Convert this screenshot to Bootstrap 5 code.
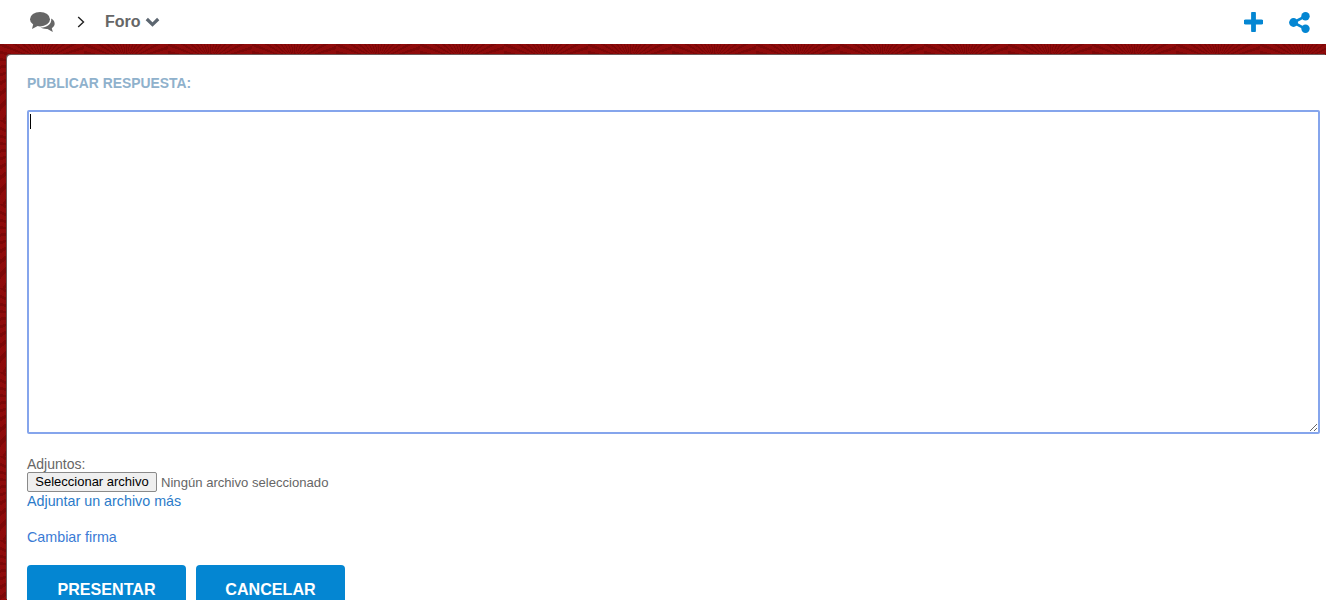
<!DOCTYPE html>
<html lang="es">
<head>
    <meta charset="UTF-8">
    <meta name="viewport" content="width=device-width, initial-scale=1.0">
    <title>Foro - Publicar respuesta</title>
    <link href="https://cdn.jsdelivr.net/npm/bootstrap@5.3.0/dist/css/bootstrap.min.css" rel="stylesheet">
    <style>
        html, body { height: 600px; overflow: hidden; }
        body {
            font-family: "Liberation Sans", Arial, sans-serif;
            font-size: 14px;
            line-height: 18px;
            color: #666;
            background-color: #8b0808;
            background-image:
                repeating-conic-gradient(from 0deg at 50% 30%, rgba(50,0,0,.16) 0 4deg, rgba(170,30,30,.12) 4deg 10deg);
            background-size: 84px 84px;
            background-position: 0 36px;
        }
        .top-bar { height: 44px; background: #fff; padding: 0 16px 0 30px; }
        .crumb-sep { margin-left: 22px; margin-right: 20px; }
        .forum-title { font-size: 16px; font-weight: 700; color: #666; line-height: 18px; margin-right: 4px; }
        .top-actions { gap: 26px; }
        .page-sheet {
            margin: 11px 0 0 7px;
            height: 545px;
            background: #fff;
            border-top-left-radius: 4px;
            box-shadow: -1px -1px 0 #6f5a5a;
            padding: 20px 6px 0 20px;
        }
        .reply-label { font-size: 13.9px; font-weight: 700; color: #8fb1cc; line-height: 16px; margin: 0 0 19px; }
        .editor-wrap { position: relative; height: 324px; }
        .reply-box {
            display: block;
            width: 100%;
            height: 100%;
            border: 2px solid #85a5ec;
            border-radius: 2px;
            outline: 0;
            padding: 0;
            background: #fff;
        }
        .text-caret { position: absolute; left: 3px; top: 4px; width: 1px; height: 15px; background: #000; }
        .attach-block { margin-top: 22px; }
        .attach-label { line-height: 16px; }
        .file-row { height: 20px; }
        .file-btn {
            font-family: "Liberation Sans", Arial, sans-serif;
            font-size: 13px;
            line-height: 16px;
            width: 130px;
            height: 20px;
            padding: 0;
            color: #000;
            background: #efefef;
            border: 1px solid #8a8a8a;
            border-radius: 2px;
        }
        .file-name { font-size: 13.1px; color: #666; margin-left: 4px; padding-top: 2px; }
        .forum-link { color: #2b7bc9; font-size: 14.3px; text-decoration: none; display: block; }
        .sign-link { margin-top: 18px; color: #3a7bd5; }
        .action-row { margin-top: 19px; gap: 10px; }
        .action-btn {
            font-size: 16.1px;
            font-weight: 700;
            line-height: 18px;
            color: #fff;
            background: #0486d2;
            border: 0;
            border-radius: 4px 4px 0 0;
            padding: 15px 0 14px;
            text-transform: uppercase;
        }
        .btn-submit { width: 159px; }
        .btn-cancel { width: 149px; }
    </style>
</head>
<body>
    <div class="top-bar d-flex align-items-center justify-content-between">
        <div class="d-flex align-items-center">
            <svg width="25" height="20" viewBox="0 0 25 20" aria-hidden="true">
                <ellipse cx="10" cy="7.2" rx="10" ry="7.2" fill="#666"/>
                <path d="M3.5 11 L2 17 L9.5 13 Z" fill="#666"/>
                <path d="M21.2 6.5 C24 8 25 10.5 24.6 12.6 C24.2 14.6 22.8 15.6 21.8 16.2 L22.8 20 L17.5 17 C14.5 17.2 12 16.4 10.5 15.6 C16 15.8 22 12.5 21.2 6.5 Z" fill="#666"/>
            </svg>
            <svg class="crumb-sep" width="8" height="12" viewBox="0 0 8 12" aria-hidden="true">
                <path d="M1.2 1 L6.5 6 L1.2 11" fill="none" stroke="#222" stroke-width="1.4"/>
            </svg>
            <span class="forum-title">Foro</span>
            <svg width="15" height="10" viewBox="0 0 15 10" aria-hidden="true">
                <path d="M1.8 2 L7.5 7.6 L13.2 2" fill="none" stroke="#5c6670" stroke-width="3.2"/>
            </svg>
        </div>
        <div class="top-actions d-flex align-items-center">
            <svg width="19" height="20" viewBox="0 0 19 20" aria-hidden="true">
                <path d="M9.5 1.5 V18.5 M1.5 10 H17.5" fill="none" stroke="#0486d2" stroke-width="4.8" stroke-linecap="round"/>
            </svg>
            <svg width="21" height="21" viewBox="0 0 21 21" aria-hidden="true">
                <path d="M4.5 10.5 L16.5 4.2 M4.5 10.5 L16.5 16.8" stroke="#0486d2" stroke-width="2.6"/>
                <circle cx="4.5" cy="10.5" r="4.4" fill="#0486d2"/>
                <circle cx="16.5" cy="4.2" r="4.2" fill="#0486d2"/>
                <circle cx="16.5" cy="16.8" r="4.2" fill="#0486d2"/>
            </svg>
        </div>
    </div>

    <div class="page-sheet">
        <p class="reply-label text-uppercase">Publicar respuesta:</p>
        <div class="editor-wrap">
            <textarea class="reply-box"></textarea>
            <span class="text-caret"></span>
        </div>
        <div class="attach-block">
            <div class="attach-label">Adjuntos:</div>
            <div class="file-row d-flex align-items-center">
                <button type="button" class="file-btn">Seleccionar archivo</button>
                <span class="file-name">Ningún archivo seleccionado</span>
            </div>
            <a href="#" class="forum-link">Adjuntar un archivo más</a>
            <a href="#" class="forum-link sign-link">Cambiar firma</a>
        </div>
        <div class="action-row d-flex">
            <button type="button" class="action-btn btn-submit">Presentar</button>
            <button type="button" class="action-btn btn-cancel">Cancelar</button>
        </div>
    </div>
    <script src="https://cdn.jsdelivr.net/npm/bootstrap@5.3.0/dist/js/bootstrap.bundle.min.js"></script>
</body>
</html>
